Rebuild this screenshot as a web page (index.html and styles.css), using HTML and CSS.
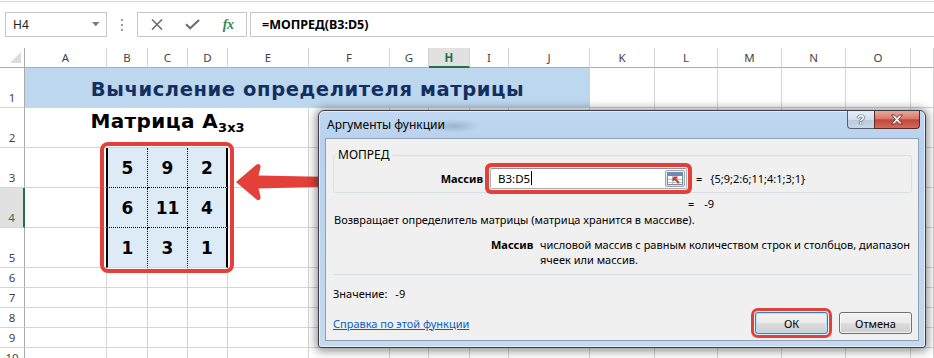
FILE: index.html
```html
<!DOCTYPE html>
<html lang="ru">
<head>
<meta charset="utf-8">
<title>МОПРЕД</title>
<link rel="stylesheet" href="styles.css">
</head>
<body>
<div class="app">
  <div class="topline"></div>
  <div class="fbar">
    <div class="namebox"><span>H4</span>
      <svg class="dd" width="8" height="5" viewBox="0 0 8 5"><path d="M0 0H7.5L3.75 4.2Z" fill="#7a7a7a"/></svg>
    </div>
    <div class="dots"><i></i><i></i><i></i></div>
    <div class="fnbox">
      <span class="slot"><svg width="12" height="11" viewBox="0 0 12 11"><path d="M1 0.5L11 10.5M11 0.5L1 10.5" stroke="#6f6f6f" stroke-width="1.6"/></svg></span>
      <span class="slot"><svg width="15" height="11" viewBox="0 0 15 11"><path d="M1 5.2L5.2 9.2L14 1" stroke="#6f6f6f" stroke-width="2.2" fill="none"/></svg></span>
      <span class="slot fx">fx</span>
    </div>
    <div class="formula">=МОПРЕД(B3:D5)</div>
  </div>

  <div class="grid">
    <div class="row hdr">
      <span class="corner"><svg width="12" height="12" viewBox="0 0 12 12"><path d="M11 0V11H0Z" fill="#dcdcdc"/></svg></span>
      <span>A</span><span>B</span><span>C</span><span>D</span><span>E</span><span>F</span><span>G</span><span class="csel">H</span><span>I</span><span>J</span><span>K</span><span>L</span><span>M</span><span>N</span><span>O</span><span></span>
    </div>
    <div class="row tall">
      <span class="rh">1</span>
      <span class="title">Вычисление определителя матрицы</span>
      <span></span><span></span><span></span><span></span><span></span><span></span>
    </div>
    <div class="row tall">
      <span class="rh">2</span>
      <span class="nr"></span><span class="nr"></span><span class="nr mtitle"><b>Матрица A<sub>3x3</sub></b></span><span class="nr"></span>
      <span></span><span></span><span></span><span></span><span></span><span></span><span></span><span></span><span></span><span></span><span></span><span></span>
    </div>
    <div class="row tall">
      <span class="rh">3</span>
      <span class="ma"></span><span class="m mb">5</span><span class="m">9</span><span class="m md">2</span>
      <span></span><span></span><span></span><span></span><span></span><span></span><span></span><span></span><span></span><span></span><span></span><span></span>
    </div>
    <div class="row tall">
      <span class="rh rsel">4</span>
      <span class="ma"></span><span class="m mb">6</span><span class="m">11</span><span class="m md">4</span>
      <span></span><span></span><span></span><span></span><span></span><span></span><span></span><span></span><span></span><span></span><span></span><span></span>
    </div>
    <div class="row tall">
      <span class="rh">5</span>
      <span class="ma"></span><span class="m mb last">1</span><span class="m last">3</span><span class="m md last">1</span>
      <span></span><span></span><span></span><span></span><span></span><span></span><span></span><span></span><span></span><span></span><span></span><span></span>
    </div>
    <div class="row"><span class="rh">6</span><span></span><span></span><span></span><span></span><span></span><span></span><span></span><span></span><span></span><span></span><span></span><span></span><span></span><span></span><span></span><span></span></div>
    <div class="row"><span class="rh">7</span><span></span><span></span><span></span><span></span><span></span><span></span><span></span><span></span><span></span><span></span><span></span><span></span><span></span><span></span><span></span><span></span></div>
    <div class="row"><span class="rh">8</span><span></span><span></span><span></span><span></span><span></span><span></span><span></span><span></span><span></span><span></span><span></span><span></span><span></span><span></span><span></span><span></span></div>
    <div class="row"><span class="rh">9</span><span></span><span></span><span></span><span></span><span></span><span></span><span></span><span></span><span></span><span></span><span></span><span></span><span></span><span></span><span></span><span></span></div>
    <div class="row"><span class="rh">10</span><span></span><span></span><span></span><span></span><span></span><span></span><span></span><span></span><span></span><span></span><span></span><span></span><span></span><span></span><span></span><span></span></div>
  </div>

  <div class="matrix-ring"></div>
  <svg class="arrow" width="165" height="55" viewBox="0 0 165 55">
    <path d="M6 27L26.5 9.5Q31 7.5 30.5 12.5L28.5 20.5L153 23Q157.5 23.3 157.5 26.5Q157.5 29.7 153 30L28.5 33.5L30.5 41.5Q31 46.5 26.5 44.5Z" fill="#e3403a"/>
  </svg>

  <div class="dlg">
    <div class="dlg-title">
      <span class="ttl">Аргументы функции</span>
      <span class="ghost"></span>
      <span class="capbtns">
        <span class="cap help">?</span>
        <span class="cap close"><svg width="14" height="11" viewBox="0 0 14 11"><path d="M1.5 1H4.5L7 3.6L9.5 1H12.5L8.6 5.5L12.5 10H9.5L7 7.4L4.5 10H1.5L5.4 5.5Z" fill="#fff" stroke="#5a2a26" stroke-width="0.9"/></svg></span>
      </span>
    </div>
    <div class="client">
      <fieldset class="group">
        <legend>МОПРЕД</legend>
        <div class="argrow">
          <span class="arglabel">Массив</span>
          <span class="input"><span class="val">B3:D5</span><span class="caret"></span>
            <span class="rbtn"><svg width="16" height="13" viewBox="0 0 16 13">
              <rect x="0.5" y="0.5" width="15" height="12" fill="#fff" stroke="#7d8a9c"/>
              <rect x="1" y="1" width="14" height="3" fill="#5b8fd0"/>
              <path d="M1 7.5H15M1 10.5H15M5.5 4V12.5M10.5 4V12.5" stroke="#9fb2c8" stroke-width="0.8"/>
              <path d="M6.5 5.5L12 11M6.5 5.5V9M6.5 5.5H10" stroke="#d2362b" stroke-width="1.8" fill="none"/>
            </svg></span>
          </span>
          <span class="eq">=</span>
          <span class="argval">{5;9;2:6;11;4:1;3;1}</span>
        </div>
      </fieldset>
      <div class="result"><span class="eq">=</span><span class="argval">-9</span></div>
      <div class="desc">Возвращает определитель матрицы (матрица хранится в массиве).</div>
      <div class="argdesc"><b>Массив</b><span>числовой массив с равным количеством строк и столбцов, диапазон ячеек или массив.</span></div>
      <div class="sep"></div>
      <div class="value">Значение:<span>-9</span></div>
      <div class="bottom">
        <a class="link" href="#">Справка по этой функции</a>
        <span class="btn ok">ОК</span>
        <span class="btn">Отмена</span>
      </div>
    </div>
  </div>
</div>
</body>
</html>
```
FILE: styles.css
```css
* { box-sizing: border-box; margin: 0; padding: 0; }
html, body { width: 934px; height: 358px; overflow: hidden; background: #fff; }
body { font-family: "Noto Sans", "Liberation Sans", sans-serif; color: #000; }

.app { position: relative; width: 934px; height: 358px; overflow: hidden; background: #fff; }

.topline { height: 2px; border-bottom: 1px solid #d5d5d5; }

/* formula bar */
.fbar { display: flex; align-items: flex-start; height: 46px; padding-top: 10px; }
.namebox {
  margin-left: 5px; width: 102px; height: 25px; border: 1px solid #c6c6c6;
  display: flex; align-items: center; justify-content: space-between;
  padding: 0 6px 0 7px; font-size: 12px; color: #222;
}
.dots { width: 30px; height: 25px; display: flex; flex-direction: column; align-items: center; justify-content: center; gap: 3px; }
.dots i { display: block; width: 2px; height: 2px; background: #9c9c9c; }
.fnbox {
  width: 110px; height: 25px; border: 1px solid #c6c6c6;
  display: flex; align-items: center; padding-left: 1px;
}
.slot { width: 36px; display: flex; justify-content: center; align-items: center; }
.fx { font-family: "Liberation Serif", serif; font-style: italic; font-weight: bold; font-size: 14px; color: #2f8a55; letter-spacing: -0.5px; }
.formula {
  flex: 1; margin-left: 3px; height: 25px; border: 1px solid #c6c6c6; border-right: none;
  padding-left: 11px; display: flex; align-items: center;
  font-size: 12.5px; font-weight: bold; color: #000;
}

/* grid */
.grid { display: flex; flex-direction: column; }
.row {
  display: grid;
  grid-template-columns: 25px 82px 41px 40px 40px 81px 81px 39px 41px 39px 81px 65px 63px 64px 64px 65px 23px;
  height: 20px;
}
.row.tall { height: 40px; }
.row > span { border-right: 1px solid #d4d4d4; border-bottom: 1px solid #d4d4d4; }
.hdr > span {
  display: flex; align-items: center; justify-content: center;
  font-size: 11.5px; color: #444; border-bottom-color: #ababab;
}
.hdr > .corner { border-right-color: #ababab; align-items: flex-end; justify-content: flex-end; padding: 0 2px 3px 0; }
.hdr > .csel { background: #e1e1e1; color: #217346; font-weight: bold; border-bottom: 2px solid #217346; }
.row > .rh {
  border-right-color: #ababab; display: flex; align-items: flex-end; justify-content: center;
  font-size: 11.5px; color: #444; line-height: 14px; padding-bottom: 2px;
}
.row > .rh.rsel { background: #e1e1e1; color: #217346; border-right: 2px solid #217346; }

.row > .title {
  grid-column: span 10; background: #bdd7ee; border-right: none;
  display: flex; align-items: center; justify-content: center;
  font-family: "DejaVu Sans", sans-serif; font-weight: bold; font-size: 19.5px;
  letter-spacing: 0.6px; color: #132e60; white-space: nowrap; padding-top: 4px;
}
.row > .nr { border-right-color: transparent; }
.mtitle { display: flex; align-items: flex-end; justify-content: center; white-space: nowrap; padding-bottom: 9px; }
.mtitle b { font-family: "DejaVu Sans", sans-serif; font-size: 20px; letter-spacing: 0.4px; line-height: 20px; }
.mtitle sub { font-size: 13px; letter-spacing: 0; vertical-align: -4px; }

.row > .ma { border-right-color: #000; }
.row > .m {
  background: #ddebf7; border-right: 1px dotted #000; border-bottom: 1px dotted #000;
  display: flex; align-items: center; justify-content: center; padding-top: 2px;
  font-family: "DejaVu Sans", sans-serif; font-weight: bold; font-size: 17px; line-height: 17px;
}
.row > .m.mb { border-left: 1px solid #000; }
.row > .m.md { border-right: 2px solid #000; }
.row > .m.last { border-bottom: 1px solid #d4d4d4; }

/* annotations */
.matrix-ring {
  position: absolute; left: 100px; top: 142px; width: 134px; height: 131px;
  border: 4px solid #e3403a; border-radius: 8px;
}
.arrow { position: absolute; left: 230px; top: 155px; }

/* dialog */
.dlg {
  position: absolute; left: 318px; top: 110px; width: 608px; height: 238px;
  border: 1px solid #3b3f45; border-radius: 6px 6px 3px 3px;
  background: linear-gradient(180deg, #c0d8f2 0%, #b8d1ed 14%, #c5daef 100%);
  box-shadow: 0 1px 10px 2px rgba(0,0,0,0.45), inset 0 0 0 1px rgba(255,255,255,0.55);
  display: flex; flex-direction: column; padding: 0 6px 6px 6px;
  font-size: 11px;
}
.dlg-title { height: 27px; display: flex; align-items: flex-start; position: relative; }
.ttl { font-size: 12px; padding: 6px 0 0 2px; line-height: 16px; position: relative; z-index: 1; }
.ghost {
  position: absolute; left: 104px; top: 8px; width: 50px; height: 14px;
  background: radial-gradient(ellipse at center, rgba(80,90,105,0.28) 0%, rgba(80,90,105,0) 70%);
}
.capbtns { margin-left: auto; display: flex; margin-right: -1px; }
.cap { height: 18px; display: flex; align-items: center; justify-content: center; border: 1px solid #56606c; border-top: none; }
.help {
  width: 27px; border-right: none; border-radius: 0 0 0 4px;
  background: linear-gradient(180deg, #e6eef7 0%, #d3dfec 50%, #b9cbdd 52%, #c8d8e8 100%);
  color: #fff; font-weight: bold; font-size: 13px; font-family: "Liberation Sans", sans-serif;
  text-shadow: 0 0 1px #333, 0 0 1px #333, 0 0 1px #333;
}
.close {
  width: 46px; border-radius: 0 0 4px 0; border-color: #5a2a26;
  background: linear-gradient(180deg, #e7a79c 0%, #d77a6c 45%, #c4443a 52%, #d06b5a 100%);
}

.client {
  flex: 1; background: #f0f0f0; border: 1px solid #8f9fb5;
  display: flex; flex-direction: column; padding: 0 6px 0 7px;
}
.group {
  margin-top: 8px; border: 1px solid #d5dfe5; border-radius: 3px;
  padding: 4px 0 3px 0; min-width: 0;
}
.group legend { margin-left: 2px; padding: 0 2px; font-size: 12px; line-height: 16px; }
.argrow { display: flex; align-items: center; height: 22px; }
.arglabel { width: 150px; text-align: right; font-weight: bold; padding-right: 1px; }
.input {
  margin-left: 6px; width: 197px; height: 21px; background: #fff;
  border: 1px solid #abadb3; border-top-color: #8e9199; border-radius: 2px;
  display: flex; align-items: center; padding-left: 7px;
  box-shadow: 0 0 0 1px #f3f3f3, 0 0 0 5px #e3403a;
}
.val { font-size: 11.5px; }
.caret { width: 1px; height: 14px; background: #000; margin-left: 1px; }
.rbtn {
  margin-left: auto; margin-right: 1px; width: 20px; height: 17px;
  border: 1px solid #9aa3ae; border-radius: 2px;
  background: linear-gradient(#f6f6f6, #dcdcdc);
  display: flex; align-items: center; justify-content: center;
}
.eq { margin-left: 9px; }
.argval { margin-left: 8px; }
.result { margin-top: 3px; padding-left: 355px; line-height: 16px; display: flex; }
.result .eq { margin-left: 0; }
.result .argval { margin-left: 10px; }
.desc { line-height: 16px; padding-left: 1px; }
.argdesc { margin-top: 9px; display: flex; line-height: 15px; padding-left: 158px; }
.argdesc b { width: 49px; flex: none; }
.argdesc span { width: 372px; }
.sep { margin-top: 7px; border-top: 1px solid #d5dfe5; }
.value { margin-top: 11px; line-height: 16px; }
.value span { margin-left: 8px; }
.bottom { margin-top: auto; margin-bottom: 6px; display: flex; align-items: center; }
.link { flex: 1; color: #0a5fc2; text-decoration: underline; font-size: 11px; }
.btn {
  width: 73px; height: 22px; display: flex; align-items: center; justify-content: center;
  border: 1px solid #707070; border-radius: 3px;
  background: linear-gradient(180deg, #f2f2f2 0%, #ebebeb 48%, #dddddd 52%, #cfcfcf 100%);
  box-shadow: inset 0 0 0 1px rgba(255,255,255,0.7);
}
.btn.ok {
  margin-right: 11px; border-color: #3c7fb1;
  box-shadow: inset 0 0 0 1px #b8e0f8, 0 0 0 1px #f0f0f0, 0 0 0 4px #e3403a;
}
```
